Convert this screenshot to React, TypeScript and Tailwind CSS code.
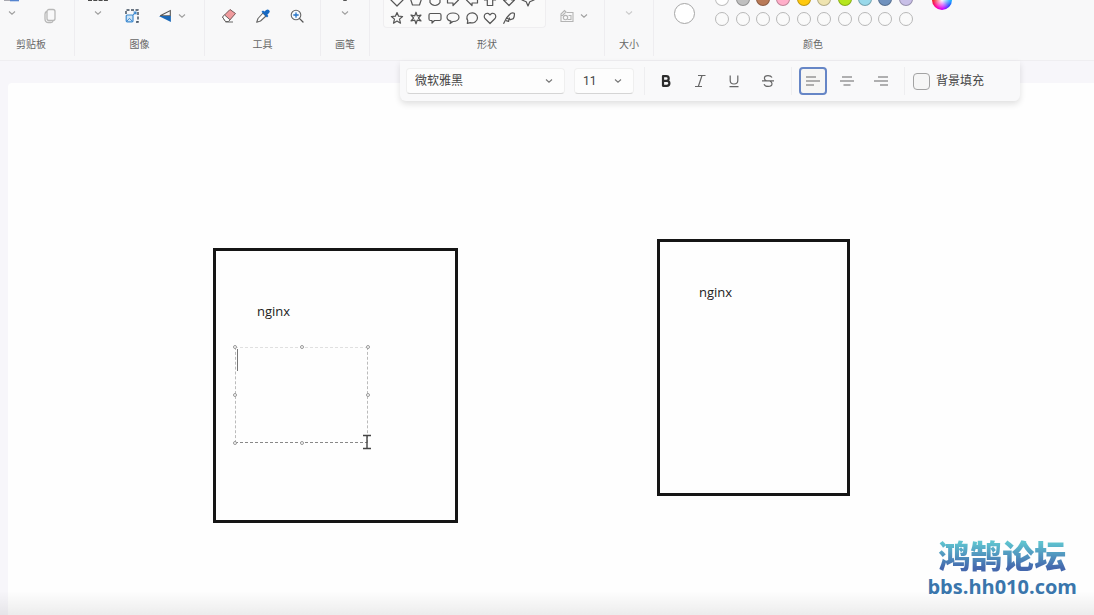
import type { ReactNode } from "react";

const shapeRows: { name: string; d: string }[][] = [
  [
    { name: "菱形", d: "M7 1 13 7 7 13 1 7Z" },
    { name: "五边形", d: "M7 1.5 12.5 6 10.5 12H3.5L1.5 6Z" },
    { name: "六边形", d: "M7 1 12 4V9.5Q10 12.5 7 12.5T2 9.5V4Z" },
    { name: "右箭头", d: "M1.5 4H7V1.5L12.5 7 7 12.5V10H1.5Z" },
    { name: "左箭头", d: "M12.5 4H7V1.5L1.5 7 7 12.5V10H12.5Z" },
    { name: "上箭头", d: "M7 1.5 12.5 7H9.7V12.5H4.3V7H1.5Z" },
    { name: "下箭头", d: "M7 12.5 12.5 7H9.7V1.5H4.3V7H1.5Z" },
    { name: "四角星", d: "M7 1 8.8 5.2 13 7 8.8 8.8 7 13 5.2 8.8 1 7 5.2 5.2Z" },
  ],
  [
    { name: "五角星", d: "M7 1.5 8.6 5.2 12.6 5.5 9.5 8.1 10.5 12.2 7 10 3.5 12.2 4.5 8.1 1.4 5.5 5.4 5.2Z" },
    { name: "六角星", d: "M7 1.2 8.2 4.8 12 4 9.4 7 12 10 8.2 9.2 7 12.8 5.8 9.2 2 10 4.6 7 2 4 5.8 4.8Z" },
    { name: "圆角矩形标注", d: "M2.5 2.5H11.5Q13 2.5 13 4V8Q13 9.5 11.5 9.5H6.5L4 12V9.5H2.5Q1 9.5 1 8V4Q1 2.5 2.5 2.5Z" },
    { name: "椭圆标注", d: "M5 10.2C2.6 9.6 1 8 1 6.2 1 3.8 3.6 2 7 2S13 3.8 13 6.2 10.4 10.5 7 10.5L4 12.5Z" },
    { name: "云形标注", d: "M2.3 12.3 2.8 9.8C.8 6.5 2.2 3.3 5 2.2 9 .8 12.5 3.3 12.5 6.8 12.5 10.4 8.5 12.8 5.2 11.6Z" },
    { name: "心形", d: "M7 12.5 2.2 7.8C.8 6.2 1 4 2.4 2.9 4 1.7 6 2.3 7 4 8 2.3 10 1.7 11.6 2.9 13 4 13.2 6.2 11.8 7.8Z" },
    { name: "闪电", d: "M1.5 12.8 4.5 7 7.6 3.5Q9.5 1.2 12.3 2.2 12.8 4.6 11.4 7.6L8.2 8.8 7 6.5M4.5 7 7 8.2 6.6 10.4 4 9.6" },
  ],
];

const swatches: { name: string; fill: string }[] = [
  { name: "白色", fill: "bg-white" },
  { name: "浅灰色", fill: "bg-[#c0c0c0]" },
  { name: "褐色", fill: "bg-[#b97a57]" },
  { name: "玫瑰色", fill: "bg-[#ffaec9]" },
  { name: "金色", fill: "bg-[#ffc90e]" },
  { name: "浅黄色", fill: "bg-[#efe4b0]" },
  { name: "酸橙色", fill: "bg-[#b5e61d]" },
  { name: "淡青绿色", fill: "bg-[#99d9ea]" },
  { name: "蓝灰色", fill: "bg-[#7092be]" },
  { name: "淡紫色", fill: "bg-[#c8bfe7]" },
];

function Chevron({ className = "text-[#a0a0a0]" }: { className?: string }) {
  return (
    <svg viewBox="0 0 8 8" className={`size-2 shrink-0 ${className}`} fill="none" stroke="currentColor" strokeWidth="1.1">
      <path d="M1 2.5 4 5.2 7 2.5" />
    </svg>
  );
}

function Group({ label, className, children }: { label: string; className: string; children: ReactNode }) {
  return (
    <section aria-label={label} className={`flex shrink-0 flex-col ${className}`}>
      <div className="flex h-8 overflow-hidden">{children}</div>
      <h2 className="pt-1 text-center text-[10px] leading-4 text-[#666]">{label}</h2>
    </section>
  );
}

function IconButton({ label, children }: { label: string; children: ReactNode }) {
  return (
    <button type="button" aria-label={label} className="flex h-8 w-6 shrink-0 items-center justify-center">
      {children}
    </button>
  );
}

function DropButton({ label, children }: { label: string; children?: ReactNode }) {
  return (
    <button type="button" aria-label={label} className="flex h-8 w-6 shrink-0 flex-col items-center gap-[7px]">
      <span className="flex h-[2px] w-full justify-center">{children}</span>
      <Chevron />
    </button>
  );
}

function Ribbon() {
  return (
    <header className="flex h-[61px] overflow-hidden border-b border-[#efeef1] bg-[#f8f8f9] pb-1">
      <Group label="剪贴板" className="w-[75px] border-r border-[#eeedf0] pr-3">
        <div className="flex gap-3.5">
          <DropButton label="粘贴">
            <svg viewBox="0 0 16 2" className="h-[2px] w-4">
              <path d="M0 0H7V1H0Z" fill="#a8a8b0" />
              <path d="M6 0H15V1.3H6Z" fill="#5584cf" />
            </svg>
          </DropButton>
          <IconButton label="复制">
            <svg viewBox="0 0 14 16" className="h-4 w-3.5" fill="none" stroke="#b8b8b8" strokeWidth="1.3">
              <rect x="4" y="1.5" width="8" height="11" rx="2" />
              <path d="M4 3.5Q2 4 2 6V11Q2 14.5 5.5 14.5H8Q9.8 14.5 10 12.7" />
            </svg>
          </IconButton>
        </div>
      </Group>

      <Group label="图像" className="w-[130px] border-r border-[#eeedf0]">
        <div className="flex gap-2.5 pl-[11px]">
          <DropButton label="选择">
            <svg viewBox="0 0 20 2" className="h-[2px] w-5">
              <path d="M0 .5H20" stroke="#4a4a4a" strokeDasharray="4 1.3" />
            </svg>
          </DropButton>
          <IconButton label="调整大小">
            <svg viewBox="0 0 14 14" className="size-3.5" fill="none">
              <path d="M1 5V1H13V13H9.5" stroke="#3a4a5c" strokeWidth="1.4" strokeDasharray="3 1.5" />
              <rect x="1.2" y="6" width="6.8" height="6.8" rx="1" fill="#cfe5f7" stroke="#3f8bd0" strokeWidth="1.2" />
              <path d="M1.5 12.5 4.5 9.3 7.5 12.5" stroke="#3f8bd0" />
              <path d="M8 6 11 3M8.5 3H11V5.5" stroke="#3f8bd0" strokeWidth="1.2" />
            </svg>
          </IconButton>
          <button type="button" aria-label="翻转" className="flex h-8 items-center gap-1 pl-1">
            <svg viewBox="0 0 16 16" className="size-4" fill="none">
              <path d="M2.2 7.8 12.3 2.6V7.8Z" stroke="#555" strokeWidth="1.1" />
              <path d="M.8 8H12.9V14Z" fill="#1c69b8" />
            </svg>
            <Chevron />
          </button>
        </div>
      </Group>

      <Group label="工具" className="w-[116px] border-r border-[#eeedf0]">
        <div className="flex w-full justify-center gap-2.5">
          <IconButton label="橡皮擦">
            <svg viewBox="0 0 16 16" className="size-4" fill="none" strokeLinejoin="round">
              <path d="M1.5 9 9 1.5 14.5 5.5 7.5 13.5 4.5 13.5Z" fill="#f09a9d" stroke="#77585a" />
              <path d="M1.5 9 3.6 7 9 11.8 7.5 13.5H4.5Z" fill="#fff" stroke="#666" />
              <path d="M4.5 14H12" stroke="#666" />
            </svg>
          </IconButton>
          <IconButton label="颜色选取器">
            <svg viewBox="0 0 16 16" className="size-4" fill="none" strokeLinejoin="round">
              <path d="M8 5 11 8 5.5 13 1.7 14.3 3 10.5Z" fill="#fff" stroke="#666" strokeWidth="1.1" />
              <path d="M6.5 3.8 8 2.5 9.4 3.6 11.2 1.9Q12.8.8 14.2 2.2T14 5L12.3 6.7 13.4 8 12 9.5Z" fill="#1769c2" />
            </svg>
          </IconButton>
          <IconButton label="放大镜">
            <svg viewBox="0 0 16 16" className="size-4" fill="none" strokeLinecap="round">
              <circle cx="7" cy="7" r="4.8" fill="#f5f9fd" stroke="#666" strokeWidth="1.1" />
              <path d="M10.6 10.6 14 14" stroke="#555" strokeWidth="1.3" />
              <path d="M7 4.8V9.2M4.8 7H9.2" stroke="#2473c8" strokeWidth="1.3" />
            </svg>
          </IconButton>
        </div>
      </Group>

      <Group label="画笔" className="w-[49px] border-r border-[#eeedf0]">
        <div className="flex w-full justify-center">
          <DropButton label="画笔">
            <span className="h-px w-1 rounded-b bg-[#555]" />
          </DropButton>
        </div>
      </Group>

      <Group label="形状" className="w-[235px] border-r border-[#eeedf0]">
        <div className="ml-[13px] flex h-7 w-[163px] flex-col justify-end rounded-b border border-t-0 border-[#efeef0] bg-[#fafafa] px-1 pr-2">
          {shapeRows.map((row, i) => (
            <div key={i} className="grid h-[18px] shrink-0 grid-cols-8">
              {row.map((shape) => (
                <button key={shape.name} type="button" aria-label={shape.name} className="flex items-center justify-center">
                  <svg viewBox="0 0 14 14" className="size-3.5" fill="none" stroke="#555" strokeWidth="1.2" strokeLinejoin="round">
                    <path d={shape.d} />
                  </svg>
                </button>
              ))}
            </div>
          ))}
        </div>
        <button type="button" aria-label="形状轮廓" className="ml-3.5 flex h-8 items-center gap-1.5">
          <svg viewBox="0 0 14 14" className="size-3.5" fill="none" stroke="#b4b4b4" strokeWidth="1.1">
            <path d="M6.5 3.5H13V12.5H1V7" />
            <circle cx="5.5" cy="8.6" r="2.2" />
            <path d="M1 6.5V5L4.5 1.5 6 3 2.5 6.5ZM8.5 6.5H11V10.5H7.5" />
          </svg>
          <Chevron />
        </button>
      </Group>

      <Group label="大小" className="w-[49px] border-r border-[#eeedf0]">
        <div className="flex w-full justify-center opacity-50">
          <DropButton label="大小" />
        </div>
      </Group>

      <Group label="颜色" className="w-[318px]">
        <div className="flex pl-5">
          <button type="button" aria-label="颜色 2" className="mt-[3px] size-[21px] rounded-full border border-[#a6a6a6] bg-white" />
          <div className="ml-[17px] flex h-[29px] w-[204px] flex-col justify-end">
            <div className="grid h-5 shrink-0 grid-cols-10 place-items-center">
              {swatches.map((s) => (
                <button key={s.name} type="button" aria-label={s.name} className={`size-3.5 rounded-full border border-black/25 ${s.fill}`} />
              ))}
            </div>
            <div className="grid h-5 shrink-0 grid-cols-10 place-items-center">
              {swatches.map((s, i) => (
                <button key={s.name} type="button" aria-label={`自定义颜色 ${i + 1}`} className="size-3.5 rounded-full border border-[#b8b8b8] bg-[#fafafa]" />
              ))}
            </div>
          </div>
          <button type="button" aria-label="编辑颜色" className="ml-4 flex h-2.5 w-5 items-end">
            <span className="size-5 shrink-0 rounded-full bg-[radial-gradient(circle,#fff_0%,transparent_65%),conic-gradient(#3f3,#0ff,#2a50ff_35%,#c0f_48%,#f0a_60%,#f02020_75%,#ff0_88%,#3f3)]" />
          </button>
        </div>
      </Group>
    </header>
  );
}

function Divider() {
  return <span className="block h-7 w-px bg-[#eeeef0]" />;
}

function AlignIcon({ d }: { d: string }) {
  return (
    <svg viewBox="0 0 16 16" className="size-4" fill="none" stroke="#666" strokeWidth="1.2">
      <path d={d} />
    </svg>
  );
}

function TextToolbar() {
  const tool = "flex h-7 w-[34px] items-center justify-center";
  const select =
    "h-[26px] appearance-none rounded border border-[#efefef] border-b-[#d5d5d5] bg-[#fdfdfd] py-0 pl-2 leading-6 font-['Roboto','Noto_Sans_CJK_SC',sans-serif]";
  return (
    <div
      role="toolbar"
      aria-label="文本"
      className="absolute top-[61px] left-[400px] z-10 flex h-10 w-[620px] items-center rounded-b-md bg-[#f9f9fa] pl-1.5 text-xs text-[#444] shadow-[0_3px_6px_rgba(0,0,0,0.12)]"
    >
      <div className="relative flex items-center">
        <select aria-label="字体" className={`w-[159px] ${select}`}>
          <option>微软雅黑</option>
        </select>
        <span className="pointer-events-none absolute right-3">
          <Chevron className="text-[#777]" />
        </span>
      </div>
      <div className="relative ml-[9px] flex items-center">
        <select aria-label="字号" className={`w-[60px] ${select}`}>
          <option>11</option>
        </select>
        <span className="pointer-events-none absolute right-3">
          <Chevron className="text-[#777]" />
        </span>
      </div>
      <div className="ml-2.5 flex items-center">
        <Divider />
        <div className="ml-1 flex">
          <button type="button" aria-label="加粗" className={tool}>
            <svg viewBox="0 0 14 14" className="size-3.5" fill="none" stroke="#2c2c2c" strokeWidth="2.2" strokeLinejoin="round">
              <path d="M4 2.2H7.3Q9.7 2.2 9.7 4.5T7.3 6.8H4ZM4 6.8H7.8Q10.4 6.8 10.4 9.3T7.8 11.8H4Z" />
            </svg>
          </button>
          <button type="button" aria-label="倾斜" className={tool}>
            <svg viewBox="0 0 14 14" className="size-3.5" fill="none" stroke="#666" strokeWidth="1.2">
              <path d="M5 1.5H12.5M2 12.5H9M9 1.5 5.3 12.5" />
            </svg>
          </button>
          <button type="button" aria-label="下划线" className={tool}>
            <svg viewBox="0 0 14 14" className="size-3.5" fill="none" stroke="#666" strokeWidth="1.2">
              <path d="M3.2 1.5V6.5Q3.2 10 7 10T10.8 6.5V1.5M2.5 12.7H11.5" />
            </svg>
          </button>
          <button type="button" aria-label="删除线" className={tool}>
            <svg viewBox="0 0 14 14" className="size-3.5" fill="none" stroke="#666" strokeWidth="1.2">
              <path d="M11 3.5Q10 1.6 7 1.6 3.4 1.6 3.4 4.2 3.4 6 5.5 6.8M1 6.9H13M9 7.2Q11 8 11 9.8 11 12.4 7.2 12.4 4 12.4 3 10.2" />
            </svg>
          </button>
        </div>
        <span className="ml-1.5">
          <Divider />
        </span>
        <div className="ml-1 flex">
          <button type="button" aria-label="左对齐" aria-pressed="true" className={tool}>
            <span className="flex size-7 items-center justify-center rounded border-2 border-[#6686c6] bg-[#f6f6f4]">
              <AlignIcon d="M1 4H11M1 8H15M1 12H9" />
            </span>
          </button>
          <button type="button" aria-label="居中" className={tool}>
            <AlignIcon d="M3 4H13M1 8H15M4.5 12H11.5" />
          </button>
          <button type="button" aria-label="右对齐" className={tool}>
            <AlignIcon d="M5 4H15M1 8H15M7 12H15" />
          </button>
        </div>
        <span className="ml-1.5">
          <Divider />
        </span>
        <label className="ml-2 flex items-center gap-1.5 whitespace-nowrap">
          <input type="checkbox" className="size-[17px] appearance-none rounded border border-[#a3a3a3] bg-[#f6f6f6]" />
          背景填充
        </label>
      </div>
    </div>
  );
}

const handles = [
  "-left-[3px] -top-[3px]",
  "left-1/2 -ml-0.5 -top-[3px]",
  "-right-[3px] -top-[3px]",
  "-left-[3px] top-1/2 -mt-0.5",
  "-right-[3px] top-1/2 -mt-0.5",
  "-left-[3px] -bottom-[3px]",
  "left-1/2 -ml-0.5 -bottom-[3px]",
];

function Canvas() {
  return (
    <main className="relative mt-[22px] ml-2 flex-1 rounded-tl bg-[#fefefe] font-['Open_Sans','Noto_Sans',sans-serif] text-[13px] leading-5 text-[#222]">
      <div className="absolute top-[165px] left-[205px] h-[275px] w-[245px] border-3 border-[#151515]">
        <p className="absolute top-[50px] left-[41px]">nginx</p>
      </div>
      <div className="absolute top-[156px] left-[649px] h-[257px] w-[193px] border-3 border-[#151515]">
        <p className="absolute top-10 left-[39px]">nginx</p>
      </div>
      <div className="absolute top-[264px] left-[227px] h-24 w-[133px] border border-dashed border-t-[#e0e0e0] border-r-[#bbb] border-b-[#888] border-l-[#bbb]">
        <textarea aria-label="文本框" className="block size-full resize-none bg-transparent outline-none" />
        <span className="absolute top-px left-px h-[22px] w-px bg-[#777]" />
        {handles.map((h) => (
          <span key={h} className={`absolute size-1 rounded-full border border-[#999] bg-white ${h}`} />
        ))}
        <svg viewBox="0 0 10 16" className="absolute -right-[5px] -bottom-2 h-4 w-2.5" fill="none" stroke="#444" strokeWidth="1.4">
          <path d="M1 1.5H9M1 14.5H9M5 1.5V14.5" />
        </svg>
      </div>
    </main>
  );
}

function Watermark() {
  return (
    <div className="absolute right-[17px] bottom-[18px] z-10 flex flex-col items-center">
      <p className="bg-linear-to-b from-[#5fc3cf] from-25% to-[#4468ad] to-80% bg-clip-text font-['Noto_Sans_CJK_SC',sans-serif] text-[32px] leading-[46px] font-black text-transparent">
        鸿鹄论坛
      </p>
      <a href="http://bbs.hh010.com" className="font-['Open_Sans',sans-serif] text-[20px] leading-5 font-bold text-[#3a76ac]">
        bbs.hh010.com
      </a>
    </div>
  );
}

export default function App() {
  return (
    <div className="relative flex min-h-screen flex-col overflow-hidden bg-[#f7f6fa] font-['Inter','Noto_Sans_CJK_SC',sans-serif]">
      <Ribbon />
      <TextToolbar />
      <Canvas />
      <div className="pointer-events-none absolute inset-x-0 bottom-0 h-6 bg-linear-to-b from-transparent to-black/7" />
      <Watermark />
    </div>
  );
}
